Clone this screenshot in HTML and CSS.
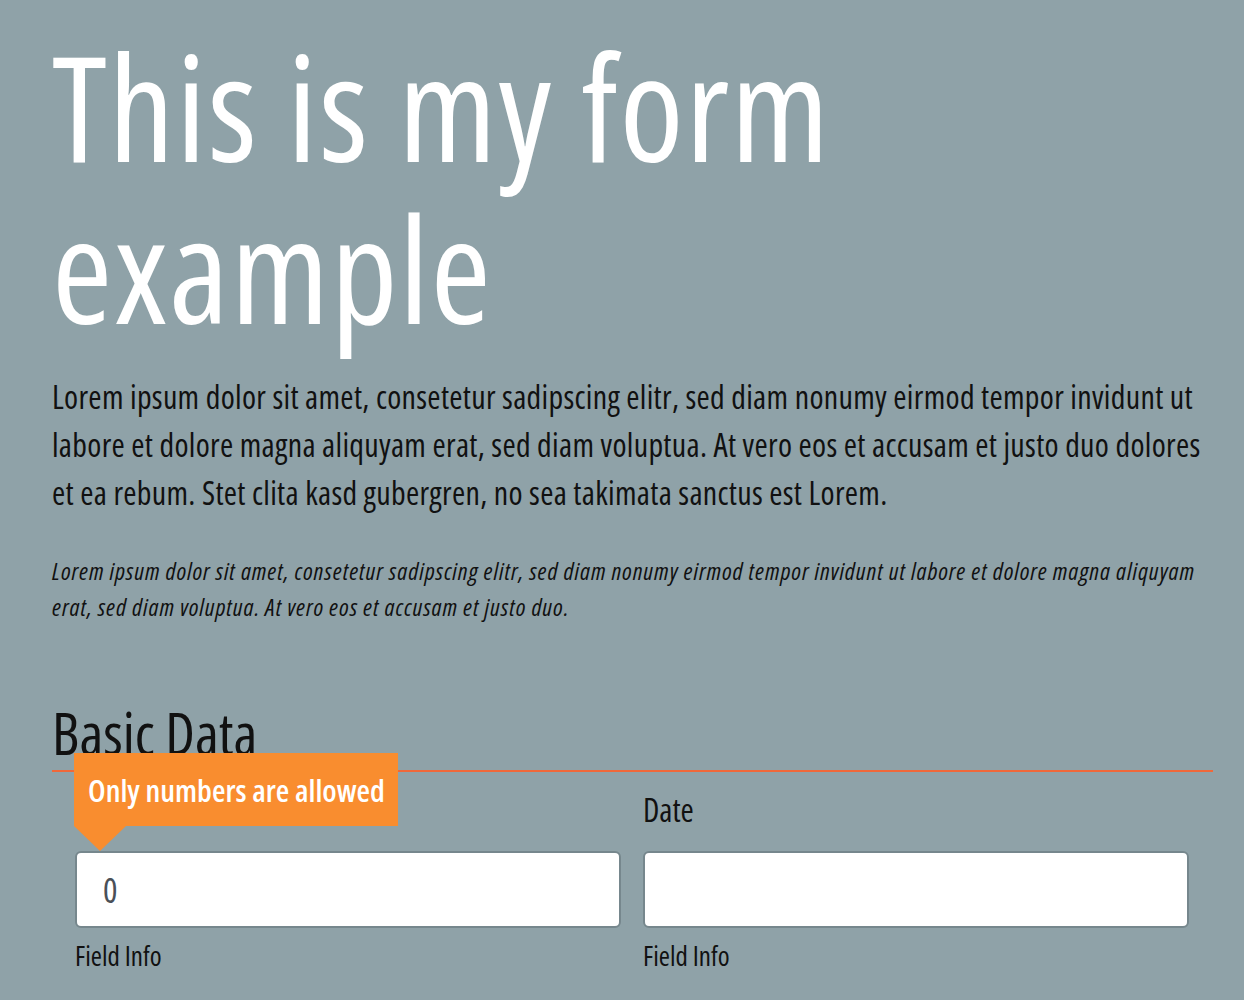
FILE: index.html
```html
<!DOCTYPE html>
<html lang="en">
<head>
<meta charset="utf-8">
<title>This is my form example</title>
<link rel="stylesheet" href="styles.css">
</head>
<body>
<main class="page">
  <h1 class="title">This is my form example</h1>
  <p class="lead">Lorem ipsum dolor sit amet, consetetur sadipscing elitr, sed diam nonumy eirmod tempor invidunt ut labore et dolore magna aliquyam erat, sed diam voluptua. At vero eos et accusam et justo duo dolores et ea rebum. Stet clita kasd gubergren, no sea takimata sanctus est Lorem.</p>
  <p class="note">Lorem ipsum dolor sit amet, consetetur sadipscing elitr, sed diam nonumy eirmod tempor invidunt ut labore et dolore magna aliquyam erat, sed diam voluptua. At vero eos et accusam et justo duo.</p>
  <section class="group">
    <h2 class="group-title">Basic Data</h2>
    <div class="fields">
      <div class="field">
        <label class="label" for="num">Number</label>
        <div class="control">
          <input class="input" id="num" type="text" value="0">
          <div class="tooltip">Only numbers are allowed</div>
        </div>
        <div class="info">Field Info</div>
      </div>
      <div class="field">
        <label class="label" for="date">Date</label>
        <div class="control">
          <input class="input" id="date" type="text" value="">
        </div>
        <div class="info">Field Info</div>
      </div>
    </div>
  </section>
</main>
</body>
</html>
```
FILE: styles.css
```css
html, body {
  margin: 0;
  padding: 0;
  background: #8fa2a8;
}
body {
  font-family: "Open Sans", "Liberation Sans Narrow", "DejaVu Sans Condensed", sans-serif;
  font-stretch: 75%;
  color: #111;
}
.page {
  padding: 25px 31px 0 52px;
}
.title {
  margin: 0;
  font-size: 146px;
  line-height: 162px;
  font-weight: 400;
  letter-spacing: 1.6px;
  color: #fff;
}
.lead {
  margin: 24px 0 0;
  font-size: 32px;
  line-height: 48px;
  font-weight: 400;
  letter-spacing: 0.3px;
}
.note {
  margin: 36px 0 0;
  font-size: 24px;
  line-height: 36px;
  font-style: italic;
  letter-spacing: 0.95px;
}
.group {
  margin-top: 77px;
}
.group-title {
  margin: 0;
  font-size: 58px;
  line-height: 62px;
  font-weight: 400;
  padding-bottom: 6px;
  border-bottom: 2px solid #f0683a;
}
.fields {
  display: grid;
  grid-template-columns: 1fr 1fr;
  column-gap: 22px;
  padding: 18px 24px 0 23px;
}
.field {
  display: flex;
  flex-direction: column;
}
.label {
  font-size: 32px;
  line-height: 40px;
  font-weight: 400;
}
.control {
  position: relative;
  margin-top: 21px;
}
.input {
  box-sizing: border-box;
  display: block;
  width: 100%;
  height: 77px;
  margin: 0;
  padding: 0 26px;
  border: 2px solid #76878d;
  border-radius: 6px;
  background: #fff;
  font-family: inherit;
  font-stretch: 75%;
  font-size: 34px;
  color: #4a5058;
  outline: none;
}
.tooltip {
  position: absolute;
  left: -1px;
  bottom: calc(100% + 25px);
  padding: 0 13px 0 14px;
  height: 73px;
  display: flex;
  align-items: center;
  background: #f98d2f;
  color: #fff;
  font-size: 31px;
  font-weight: 600;
  white-space: nowrap;
}
.tooltip::after {
  content: "";
  position: absolute;
  left: 0;
  top: 100%;
  border-style: solid;
  border-width: 25px 26px 0 26px;
  border-color: #f98d2f transparent transparent transparent;
}
.info {
  margin-top: 12px;
  font-size: 27px;
  line-height: 32px;
}
```
